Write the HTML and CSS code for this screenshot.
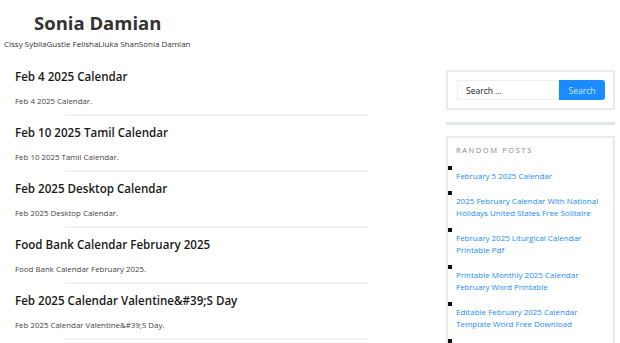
FILE: index.html
```html
<!DOCTYPE html>
<html lang="en">
<head>
    <meta charset="UTF-8">
    <meta name="viewport" content="width=device-width, initial-scale=1.0">
    <title>Sonia Damian</title>
    <link rel="stylesheet" href="styles.css">
</head>
<body>
    <header class="site-header">
        <h1 class="site-title">Sonia Damian</h1>
        <p class="site-tagline">Cissy SybilaGustie FelishaLiuka ShanSonia Damian</p>
    </header>

    <div class="page">
        <main class="posts">
            <article class="post">
                <h2>Feb 4 2025 Calendar</h2>
                <p>Feb 4 2025 Calendar.</p>
            </article>
            <article class="post">
                <h2>Feb 10 2025 Tamil Calendar</h2>
                <p>Feb 10 2025 Tamil Calendar.</p>
            </article>
            <article class="post">
                <h2>Feb 2025 Desktop Calendar</h2>
                <p>Feb 2025 Desktop Calendar.</p>
            </article>
            <article class="post">
                <h2>Food Bank Calendar February 2025</h2>
                <p>Food Bank Calendar February 2025.</p>
            </article>
            <article class="post">
                <h2>Feb 2025 Calendar Valentine&amp;#39;S Day</h2>
                <p>Feb 2025 Calendar Valentine&amp;#39;S Day.</p>
            </article>
        </main>

        <aside class="sidebar">
            <div class="widget search-widget">
                <form class="search-form">
                    <input type="text" class="search-field" placeholder="Search ...">
                    <button type="button" class="search-btn">Search</button>
                </form>
            </div>
            <div class="widget-sep"></div>
            <div class="widget random-posts">
                <h3>Random Posts</h3>
                <ul>
                    <li><a href="#">February 5 2025 Calendar</a></li>
                    <li><a href="#">2025 February Calendar With National Holidays United States Free Solitaire</a></li>
                    <li><a href="#">February 2025 Liturgical Calendar Printable Pdf</a></li>
                    <li><a href="#">Printable Monthly 2025 Calendar February Word Printable</a></li>
                    <li><a href="#">Editable February 2025 Calendar Template Word Free Download</a></li>
                    <li><a href="#">February 2025 Calendar Printable</a></li>
                </ul>
            </div>
        </aside>
    </div>
</body>
</html>
```

FILE: styles.css
```css
body {
    font-family: 'Open Sans', 'DejaVu Sans', sans-serif;
    margin: 0;
    padding: 0;
    background-color: #fff;
    color: #333;
    overflow: hidden;
}
.site-header {
    padding: 10px 0 0 4px;
    height: 56px;
    box-sizing: border-box;
}
.site-title {
    margin: 0 0 0 30px;
    font-size: 18.5px;
    line-height: 26px;
    font-weight: 700;
    color: #333;
}
.site-tagline {
    margin: 2px 0 0;
    font-size: 8px;
    line-height: 12px;
    color: #333;
}
.page {
    display: flex;
    align-items: flex-start;
}
.posts {
    width: 353px;
    padding-left: 15px;
    padding-top: 11px;
}
.post h2 {
    margin: 0;
    font-size: 11.6px;
    line-height: 20px;
    font-weight: 600;
    color: #1a1a1a;
}
.post p {
    margin: 7px 0 0;
    font-size: 7.9px;
    line-height: 14px;
    color: #444;
}
.post::after {
    content: "";
    display: block;
    height: 2px;
    margin: 6px 0 7px 50px;
    background-color: #eef2f3;
}
.sidebar {
    width: 169px;
    margin-left: 78px;
    padding-top: 14px;
}
.widget {
    border: 2px solid #ebebeb;
    padding: 8px 8px 8px 9px;
}
.search-form {
    display: flex;
}
.search-field {
    width: 102px;
    height: 20px;
    box-sizing: border-box;
    border: 1px solid #f0f0f0;
    padding: 0 8px;
    font-family: inherit;
    font-size: 8.5px;
    color: #333;
    outline: none;
}
.search-field::placeholder {
    color: #222;
}
.search-btn {
    width: 46px;
    height: 20px;
    border: none;
    border-radius: 0 3px 3px 0;
    background-color: #1a8cff;
    color: #cfe6ff;
    font-family: inherit;
    font-size: 8.5px;
    padding: 0;
}
.widget-sep {
    height: 3px;
    margin: 12px 0 11px;
    background-color: #e3e6e7;
}
.random-posts {
    padding: 6px 8px 0 0;
}
.random-posts h3 {
    margin: 0 0 10px 8px;
    font-size: 7.5px;
    line-height: 12px;
    font-weight: 400;
    letter-spacing: 1.6px;
    text-transform: uppercase;
    color: #888;
}
.random-posts ul {
    list-style: none;
    margin: 0;
    padding: 0;
}
.random-posts li {
    padding-bottom: 9.5px;
}
.random-posts li::before {
    content: "";
    display: block;
    width: 4px;
    height: 4px;
    background-color: #111;
}
.random-posts a {
    display: block;
    padding-left: 8px;
    font-size: 8px;
    line-height: 11.7px;
    color: #1a8cff;
    text-decoration: none;
}
```
